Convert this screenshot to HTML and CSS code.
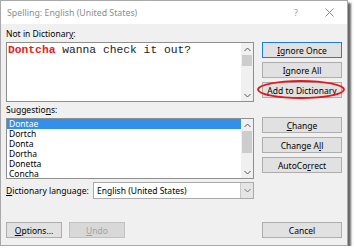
FILE: index.html
```html
<!DOCTYPE html>
<html lang="en">
  <head>
    <meta charset="UTF-8" />
    <title>Spelling: English (United States)</title>
    <link rel="stylesheet" href="styles.css">
  </head>
  <body>
    <div class="dialog">
      <div class="titlebar">
        <span class="title">Spelling: English (United States)</span>
        <span class="help">?</span>
        <svg class="close" width="9" height="9" viewBox="0 0 9 9">
          <path d="M0.5 0.5 L8.5 8.5 M8.5 0.5 L0.5 8.5" stroke="#8a8a8a" stroke-width="1" fill="none" />
        </svg>
      </div>

      <div class="content">
        <div class="left">
          <div class="label">Not in Dictionar<u>y</u>:</div>
          <div class="box textbox">
            <div class="sentence"><span class="error">Dontcha</span> wanna check it out?</div>
            <div class="scrollbar">
              <svg class="arrow" width="7" height="5" viewBox="0 0 7 5"><path d="M0.5 4 L3.5 1 L6.5 4" stroke="#555" fill="none" /></svg>
              <div class="track"><div class="thumb short"></div></div>
              <svg class="arrow" width="7" height="5" viewBox="0 0 7 5"><path d="M0.5 1 L3.5 4 L6.5 1" stroke="#555" fill="none" /></svg>
            </div>
          </div>

          <div class="label">Suggestio<u>n</u>s:</div>
          <div class="box list">
            <ul class="items">
              <li class="selected">Dontae</li>
              <li>Dortch</li>
              <li>Donta</li>
              <li>Dortha</li>
              <li>Donetta</li>
              <li>Concha</li>
            </ul>
            <div class="scrollbar">
              <svg class="arrow" width="7" height="5" viewBox="0 0 7 5"><path d="M0.5 4 L3.5 1 L6.5 4" stroke="#555" fill="none" /></svg>
              <div class="track"><div class="thumb long"></div></div>
              <svg class="arrow" width="7" height="5" viewBox="0 0 7 5"><path d="M0.5 1 L3.5 4 L6.5 1" stroke="#555" fill="none" /></svg>
            </div>
          </div>

          <div class="lang-row">
            <span class="label"><u>D</u>ictionary language:</span>
            <div class="select">
              <span class="value">English (United States)</span>
              <span class="drop">
                <svg width="7" height="5" viewBox="0 0 7 5"><path d="M0.5 1 L3.5 4 L6.5 1" stroke="#777" fill="none" /></svg>
              </span>
            </div>
          </div>

          <div class="bottom">
            <button class="btn wide"><u>O</u>ptions...</button>
            <button class="btn wide" disabled><u>U</u>ndo</button>
          </div>
        </div>

        <div class="right">
          <button class="btn default"><u>I</u>gnore Once</button>
          <button class="btn">I<u>g</u>nore All</button>
          <button class="btn marked"><u>A</u>dd to Dictionary</button>
          <button class="btn group"><u>C</u>hange</button>
          <button class="btn">Change A<u>l</u>l</button>
          <button class="btn">AutoCo<u>r</u>rect</button>
          <button class="btn cancel">Cancel</button>
        </div>
      </div>
    </div>
  </body>
</html>
```

FILE: styles.css
```css
body {
  margin: 0;
  background: #fff;
  font-family: "Noto Sans", "Open Sans", sans-serif;
  font-size: 8.5px;
  color: #000;
}
.dialog {
  width: 346px;
  height: 244px;
  border: 1px solid #a8a8a8;
  background: #f0f0f0;
  box-shadow: 3px 3px 2px rgba(0, 0, 0, 0.6);
  display: flex;
  flex-direction: column;
}
.titlebar {
  height: 23px;
  background: #fff;
  display: flex;
  align-items: center;
  padding-left: 6px;
}
.title {
  flex: 1;
  color: #8c8c8c;
  font-size: 8.8px;
}
.help {
  color: #9a9a9a;
  font-size: 9px;
  margin-right: 27px;
}
.close {
  margin-right: 13px;
}
.content {
  flex: 1;
  display: flex;
  padding: 0 5px 7px 5px;
  gap: 8px;
}
.left {
  width: 248px;
  display: flex;
  flex-direction: column;
}
.label {
  line-height: 11px;
}
.left > .label:first-child {
  margin-top: 4px;
}
.box {
  display: flex;
  background: #fff;
  border: 1px solid #8e8f8f;
  margin-top: 3px;
}
.textbox {
  height: 58px;
  margin-bottom: 2px;
}
.sentence {
  flex: 1;
  padding: 1px 1px;
  font-family: "Liberation Mono", "Courier New", monospace;
  font-size: 11.3px;
  line-height: 12px;
  color: #222;
}
.error {
  color: #e8201e;
  font-weight: bold;
}
.scrollbar {
  width: 12px;
  background: #f0f0f0;
  display: flex;
  flex-direction: column;
  align-items: center;
}
.arrow {
  margin: 4px 0 3px;
}
.track {
  flex: 1;
  width: 100%;
}
.thumb {
  background: #cdcdcd;
  margin: 0 1px;
}
.thumb.short {
  height: 11px;
}
.thumb.long {
  height: 22px;
}
.list {
  height: 59px;
}
.items {
  flex: 1;
  list-style: none;
  margin: 0;
  padding: 0;
}
.items li {
  line-height: 10px;
  padding-left: 2px;
}
.items .selected {
  background: #3390ea;
  color: #fff;
}
.lang-row {
  margin-top: 3px;
  display: flex;
  align-items: center;
}
.lang-row .label {
  width: 87px;
}
.select {
  flex: 1;
  height: 15px;
  display: flex;
  background: #fff;
  border: 1px solid #a9a9a9;
}
.select .value {
  flex: 1;
  padding-left: 3px;
  line-height: 15px;
}
.drop {
  width: 12px;
  background: #e5e5e5;
  border-left: 1px solid #c8c8c8;
  display: flex;
  align-items: center;
  justify-content: center;
}
.bottom {
  margin-top: auto;
  display: flex;
  gap: 7px;
}
.right {
  width: 80px;
  padding-top: 18px;
  display: flex;
  flex-direction: column;
  gap: 4px;
}
.btn {
  height: 16px;
  padding: 0;
  font-family: inherit;
  font-size: 8.5px;
  color: #000;
  background: #e1e1e1;
  border: 1px solid #adadad;
  position: relative;
}
.btn.wide {
  width: 56px;
}
.btn.default {
  border-color: #1b7fd6;
}
.btn:disabled {
  color: #a2a2a2;
  background: #d8d8d8;
  border-color: #c2c2c2;
}
.btn.group {
  margin-top: 15px;
}
.btn.cancel {
  margin-top: auto;
}
.btn.marked::after {
  content: "";
  position: absolute;
  left: -6px;
  right: -4px;
  top: -3px;
  bottom: -2px;
  border: 2px solid #e3161b;
  border-radius: 50%;
}
```
